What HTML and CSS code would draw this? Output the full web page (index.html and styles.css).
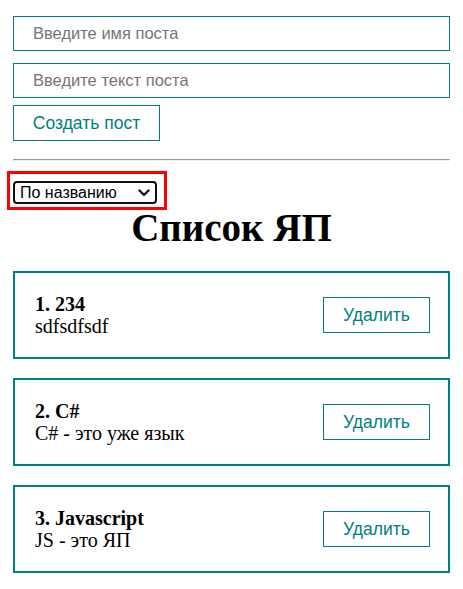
FILE: index.html
```html
<!DOCTYPE html>
<html lang="ru">
<head>
<meta charset="utf-8">
<title>Посты</title>
<link rel="stylesheet" href="styles.css">
</head>
<body>
<div class="app">
  <form class="post-form">
    <input class="field field-name" type="text" placeholder="Введите имя поста">
    <input class="field field-body" type="text" placeholder="Введите текст поста">
    <button class="btn btn-create" type="button">Создать пост</button>
  </form>
  <hr class="divider">
  <div class="sort-box">
    <span class="select-wrap">
      <select class="sort-select">
        <option>По названию</option>
        <option>По описанию</option>
      </select>
      <svg class="chevron" width="12" height="8" viewBox="0 0 12 8"><polyline points="1.5,1.5 6,6 10.5,1.5" fill="none" stroke="#000" stroke-width="2.2" stroke-linecap="round" stroke-linejoin="round"/></svg>
    </span>
  </div>
  <h1 class="title">Список ЯП</h1>
  <div class="post">
    <div class="post-content">
      <strong class="post-title">1. 234</strong>
      <div class="post-body">sdfsdfsdf</div>
    </div>
    <button class="btn btn-delete" type="button">Удалить</button>
  </div>
  <div class="post">
    <div class="post-content">
      <strong class="post-title">2. C#</strong>
      <div class="post-body">C# - это уже язык</div>
    </div>
    <button class="btn btn-delete" type="button">Удалить</button>
  </div>
  <div class="post">
    <div class="post-content">
      <strong class="post-title">3. Javascript</strong>
      <div class="post-body">JS - это ЯП</div>
    </div>
    <button class="btn btn-delete" type="button">Удалить</button>
  </div>
</div>
</body>
</html>
```

FILE: styles.css
```css
* { box-sizing: border-box; }

body {
  margin: 0;
  background: #fff;
  font-family: "Liberation Serif", "Times New Roman", serif;
  color: #000;
}

.app {
  padding: 16px 13px 0 13px;
}

.post-form {
  display: flex;
  flex-direction: column;
  align-items: flex-start;
}

.field {
  display: block;
  width: 100%;
  height: 35px;
  padding: 0 19px;
  border: 1px solid #008080;
  border-radius: 0;
  font-family: "Liberation Sans", Arial, sans-serif;
  font-size: 16.5px;
  color: #000;
  outline: none;
  background: #fff;
}

.field::placeholder { color: #757575; }

.field-name { margin-bottom: 12px; }
.field-body { margin-bottom: 7px; }

.btn {
  background: #fff;
  border: 1px solid #008080;
  color: #008080;
  font-family: "Liberation Sans", Arial, sans-serif;
  font-size: 17.5px;
  padding: 0;
  cursor: pointer;
}

.btn-create {
  width: 147px;
  height: 36px;
}

.divider {
  margin: 18px 0 0 0;
}

.sort-box {
  display: inline-block;
  margin: 10px 0 0 -6px;
  border: 3px solid #ff0000;
  padding: 7px 7px 3px 3px;
  line-height: 0;
}

.select-wrap {
  position: relative;
  display: inline-block;
}

.sort-select {
  appearance: none;
  -webkit-appearance: none;
  width: 144px;
  height: 23px;
  border: 2px solid #111;
  border-radius: 4px;
  background: #fff;
  padding: 0 0 0 5px;
  font-family: "Liberation Sans", Arial, sans-serif;
  font-size: 16px;
  color: #000;
  outline: none;
}

.chevron {
  position: absolute;
  right: 7px;
  top: 8px;
  pointer-events: none;
}

.title {
  margin: 0 0 25px 0;
  text-align: center;
  font-size: 39px;
  line-height: 36px;
  font-weight: bold;
}

.post {
  display: flex;
  justify-content: space-between;
  align-items: center;
  height: 88px;
  border: 2px solid #008080;
  padding: 0 18px 0 20px;
  margin-bottom: 19px;
}

.post-content {
  font-size: 20px;
  line-height: 22px;
}

.post-title {
  display: block;
  font-weight: bold;
}

.btn-delete {
  width: 107px;
  height: 36px;
}
```
